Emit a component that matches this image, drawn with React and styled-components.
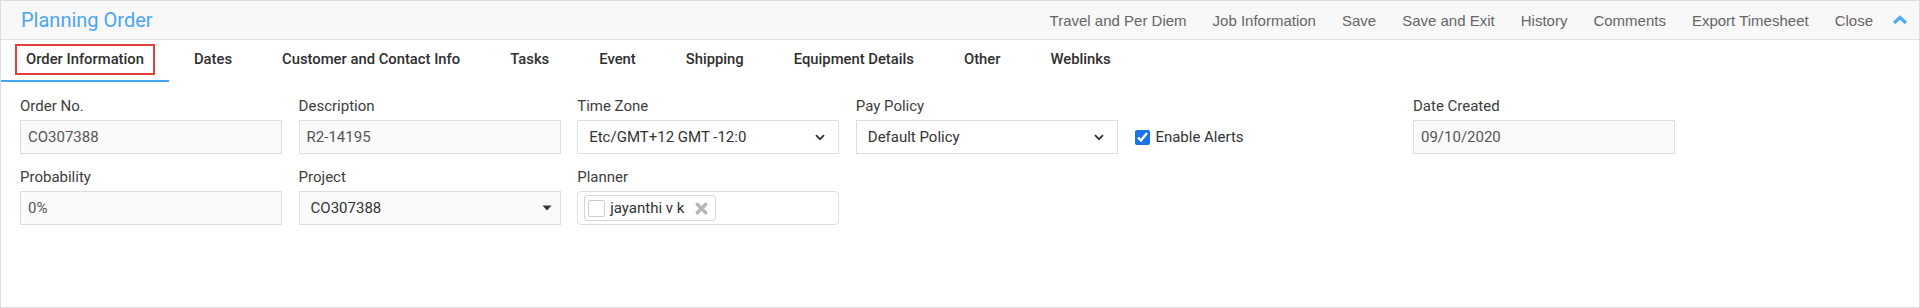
import React from 'react';
import styled, { createGlobalStyle } from 'styled-components';

const GlobalStyle = createGlobalStyle`
    html, body {
        margin: 0;
        padding: 0;
        background: #ffffff;
    }
    body {
        font-family: Roboto, 'Liberation Sans', Arial, sans-serif;
    }
    * {
        box-sizing: border-box;
    }
`;

const tabs = [
    'Order Information',
    'Dates',
    'Customer and Contact Info',
    'Tasks',
    'Event',
    'Shipping',
    'Equipment Details',
    'Other',
    'Weblinks',
];

const actions = [
    'Travel and Per Diem',
    'Job Information',
    'Save',
    'Save and Exit',
    'History',
    'Comments',
    'Export Timesheet',
    'Close',
];

function ChevronUp() {
    return (
        <svg width="16" height="10" viewBox="0 0 16 10">
            <polyline points="2,8 8,2.5 14,8" fill="none" stroke="#55acf3" strokeWidth="3.4" />
        </svg>
    );
}

function ChevronDown() {
    return (
        <svg width="10" height="7" viewBox="0 0 10 7">
            <polyline points="1,1.2 5,5.2 9,1.2" fill="none" stroke="#333" strokeWidth="1.8" />
        </svg>
    );
}

function Caret() {
    return (
        <svg width="10" height="6" viewBox="0 0 10 6">
            <polygon points="0.5,0.5 9.5,0.5 5,5.5" fill="#333" />
        </svg>
    );
}

function RemoveIcon() {
    return (
        <svg width="13" height="13" viewBox="0 0 13 13">
            <path d="M2.3 2.3 L10.7 10.7 M10.7 2.3 L2.3 10.7" stroke="#b5b5b5" strokeWidth="3.4" strokeLinecap="round" />
        </svg>
    );
}

export default function App() {
    return (
        <>
            <GlobalStyle />
            <Panel>
                <Header>
                    <Title>Planning Order</Title>
                    <Actions>
                        {actions.map((a) => (
                            <Action key={a}>{a}</Action>
                        ))}
                        <Collapse>
                            <ChevronUp />
                        </Collapse>
                    </Actions>
                </Header>

                <TabBar>
                    {tabs.map((t, i) => (
                        <Tab key={t} $active={i === 0}>
                            {i === 0 ? <Highlight>{t}</Highlight> : t}
                        </Tab>
                    ))}
                </TabBar>

                <Form>
                    <Field>
                        <Label>Order No.</Label>
                        <TextInput readOnly value="CO307388" />
                    </Field>
                    <Field>
                        <Label>Description</Label>
                        <TextInput readOnly value="R2-14195" />
                    </Field>
                    <Field>
                        <Label>Time Zone</Label>
                        <SelectBox>
                            <span>Etc/GMT+12 GMT -12:0</span>
                            <ChevronDown />
                        </SelectBox>
                    </Field>
                    <Field>
                        <Label>Pay Policy</Label>
                        <SelectBox>
                            <span>Default Policy</span>
                            <ChevronDown />
                        </SelectBox>
                    </Field>
                    <CheckField>
                        <Check type="checkbox" defaultChecked />
                        <CheckText>Enable Alerts</CheckText>
                    </CheckField>
                    <Field>
                        <Label>Date Created</Label>
                        <TextInput readOnly value="09/10/2020" />
                    </Field>

                    <Field>
                        <Label>Probability</Label>
                        <TextInput readOnly value="0%" />
                    </Field>
                    <Field>
                        <Label>Project</Label>
                        <SelectBox $muted $tight>
                            <span>CO307388</span>
                            <Caret />
                        </SelectBox>
                    </Field>
                    <Field>
                        <Label>Planner</Label>
                        <TagBox>
                            <Chip>
                                <ChipCheck />
                                <ChipText>jayanthi v k</ChipText>
                                <RemoveIcon />
                            </Chip>
                        </TagBox>
                    </Field>
                </Form>
            </Panel>
        </>
    );
}

const Panel = styled.div`
    border: 1px solid #dadde4;
    height: 308px;
    width: 100%;
    display: flex;
    flex-direction: column;
`;

const Header = styled.div`
    height: 39px;
    background: #f8f8f8;
    border-bottom: 1px solid #dfe2e8;
    display: flex;
    align-items: center;
    justify-content: space-between;
    padding: 0 11px 0 20px;
`;

const Title = styled.div`
    color: #4ba6f0;
    font-family: Roboto, sans-serif;
    font-size: 20px;
`;

const Actions = styled.div`
    display: flex;
    align-items: center;
    gap: 26px;
`;

const Action = styled.span`
    color: #666;
    font-family: 'Liberation Sans', Arial, sans-serif;
    font-size: 15px;
`;

const Collapse = styled.span`
    display: flex;
    margin-left: -7px;
`;

const TabBar = styled.div`
    display: flex;
    height: 42px;
`;

const Tab = styled.div`
    display: flex;
    align-items: center;
    padding: 0 25px 2px;
    height: 42px;
    border-bottom: 2px solid ${(p) => (p.$active ? '#42a5f5' : 'transparent')};
    color: #2f2f2f;
    font-family: Roboto, sans-serif;
    font-weight: 500;
    font-size: 14.8px;
`;

const Highlight = styled.span`
    border: 2px solid #e2403b;
    line-height: 17px;
    padding: 5px 9px;
    margin: 0 -11px;
`;

const Form = styled.div`
    display: grid;
    grid-template-columns: repeat(6, 262px);
    column-gap: 16.6px;
    row-gap: 13px;
    padding: 14px 0 0 19px;
`;

const Field = styled.div`
    display: flex;
    flex-direction: column;
`;

const Label = styled.label`
    color: #3d3d3d;
    font-size: 15px;
    line-height: 20px;
    margin-bottom: 4px;
`;

const TextInput = styled.input`
    height: 34px;
    width: 100%;
    border: 1px solid #dcdde5;
    background: #fafafa;
    padding: 0 7px;
    color: #555;
    font-family: Roboto, sans-serif;
    font-size: 15px;
    outline: none;
`;

const SelectBox = styled.div`
    height: 34px;
    border: 1px solid #dcdde5;
    background: ${(p) => (p.$muted ? '#fafafa' : '#ffffff')};
    display: flex;
    align-items: center;
    justify-content: space-between;
    padding: 0 ${(p) => (p.$tight ? '8px' : '13px')} 0 11px;
    color: #333;
    font-size: 15px;
`;

const CheckField = styled.div`
    display: flex;
    align-items: center;
    height: 34px;
    margin-top: 24px;
    padding-left: 1px;
`;

const Check = styled.input`
    width: 15px;
    height: 15px;
    margin: 0;
    accent-color: #1a73e8;
`;

const CheckText = styled.span`
    margin-left: 5px;
    color: #333;
    font-size: 15px;
`;

const TagBox = styled.div`
    height: 34px;
    border: 1px solid #dcdde5;
    border-radius: 4px;
    background: #fff;
    display: flex;
    align-items: center;
    padding: 0 6px;
`;

const Chip = styled.div`
    height: 26px;
    display: flex;
    align-items: center;
    border: 1px solid #d4d4d8;
    border-radius: 3px;
    padding: 0 7px 0 3px;
`;

const ChipCheck = styled.span`
    width: 17px;
    height: 17px;
    border: 1px solid #cdcdd2;
    border-radius: 2px;
    background: #fff;
`;

const ChipText = styled.span`
    margin: 0 11px 0 5px;
    color: #333;
    font-size: 15px;
`;
